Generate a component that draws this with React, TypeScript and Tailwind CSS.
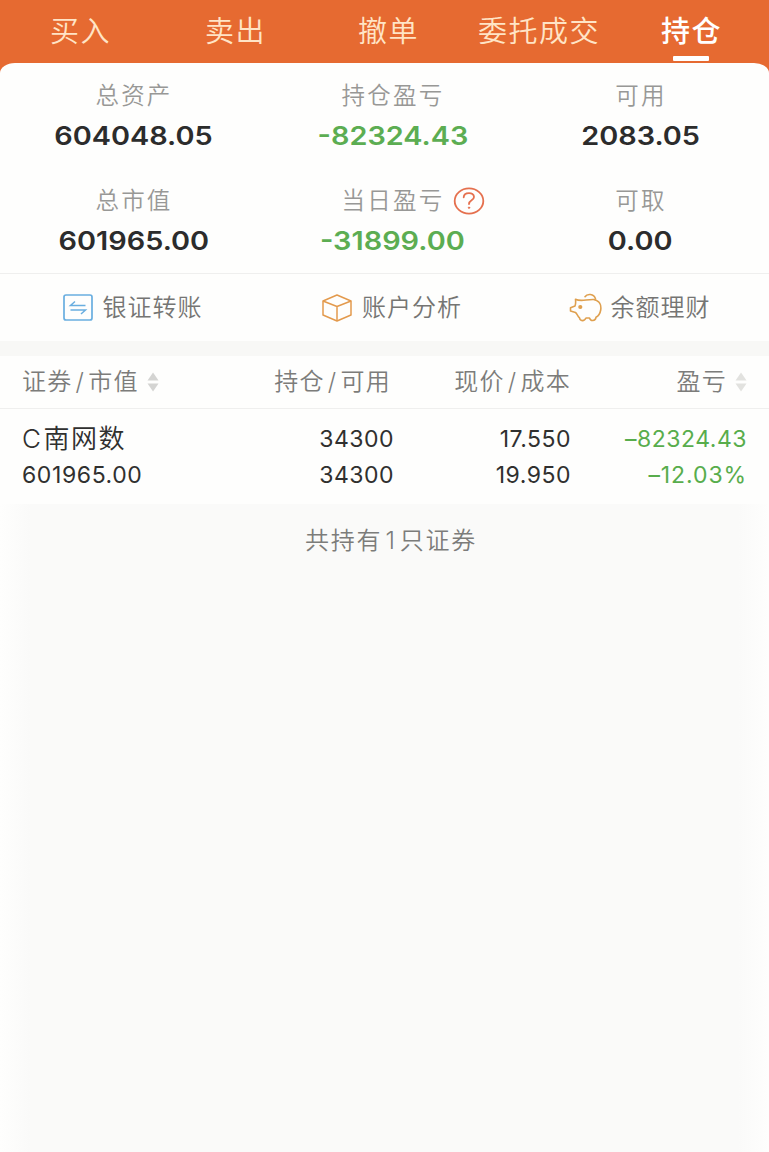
import { ReactNode } from 'react';
import clsx from 'clsx';

const tabs = [
  { name: '买入', box: 'w-[158px] pl-[50px]' },
  { name: '卖出', box: 'w-[152px] pl-[47px]' },
  { name: '撤单', box: 'w-[152px] pl-[48px]' },
  { name: '委托成交', box: 'w-[166px] pl-[16px]' },
  { name: '持仓', box: 'w-[125px] pl-[33px]' },
];

const holdings = [
  {
    name: 'C南网数',
    marketValue: '601965.00',
    amount: '34300',
    available: '34300',
    price: '17.550',
    cost: '19.950',
    profit: '–82324.43',
    profitRate: '–12.03%',
  },
];

function TransferIcon() {
  return (
    <svg width="31" height="27" viewBox="0 0 31 27" fill="none" stroke="#69aee0" strokeWidth="1.7">
      <rect x="1" y="1" width="28" height="25" rx="2" />
      <path d="M22.500 11.500H7.500L12 7.500M7.500 16H22.500L18 20" strokeWidth="1.5" />
    </svg>
  );
}

function BoxIcon() {
  return (
    <svg width="31" height="28" viewBox="0 0 31 28" fill="none" stroke="#e39a4d" strokeWidth="1.500" strokeLinejoin="round">
      <path d="M15 1L29 7V21L15 27L1 21V7Z" />
      <path d="M1 7L15 12.500L29 7M15 12.500V27" />
    </svg>
  );
}

function PiggyIcon() {
  return (
    <svg width="33" height="30" viewBox="0 0 33 30" fill="none" stroke="#dfa04f" strokeWidth="1.6" strokeLinecap="round" strokeLinejoin="round">
      <path d="M6.500 6.300C12 9 17 6.300 24.500 6.500C30.500 7.500 32.500 12 31.700 17C31 21 29.500 23 27 24.300C26.300 28.500 21.500 28.500 20.500 25H17C15.500 28.500 10.800 28.500 10.500 24.800C8.500 23 8 20.500 6.500 19.500L1.500 18V14.700L6 13C6.800 11 6.800 9 6.500 6.300Z" />
      <path d="M16 3.700C18 0.600 25 0.300 26.500 6" />
      <circle cx="11.300" cy="14" r="1.300" fill="#dfa04f" />
    </svg>
  );
}

function HelpIcon() {
  return (
    <svg width="32" height="28" viewBox="0 0 32 28" fill="none" stroke="#e5704e" strokeLinecap="round">
      <ellipse cx="16" cy="14" rx="14.300" ry="12.600" strokeWidth="1.800" />
      <path d="M10.700 10.300C11 4.800 21 4.800 21 10C21 13.500 16 13.200 16 17" strokeWidth="1.800" />
      <circle cx="16" cy="20.700" r="0.700" fill="#e5704e" />
    </svg>
  );
}

function SortIcon({ className }: { className?: string }) {
  return (
    <svg width="12" height="20" viewBox="0 0 12 20" className={className} fill="currentColor">
      <path d="M6 0.500L11.500 8.500H0.500Z" />
      <path d="M6 19.500L11.500 11.500H0.500Z" />
    </svg>
  );
}

function Slash() {
  return <span className="mr-[3px] ml-[3px]">/</span>;
}

function Stat({ label, value, loss, help }: { label: string; value: string; loss?: boolean; help?: boolean }) {
  return (
    <div className="flex flex-col items-center">
      <div className="relative flex h-9 items-center pl-[2px] text-[23.5px] tracking-[2.2px] font-[350] text-[#989896]">
        {label}
        {help && (
          <span className="absolute left-full ml-[9px]">
            <HelpIcon />
          </span>
        )}
      </div>
      <div
        className={clsx(
          'flex h-[42px] scale-x-[1.11] items-center pl-px text-[26px] font-semibold',
          loss ? 'text-[#5cad52]' : 'text-[#2c2c2c]'
        )}
      >
        {value}
      </div>
    </div>
  );
}

function Action({ icon, label }: { icon: ReactNode; label: string }) {
  return (
    <div className="flex items-center justify-center gap-[9px] text-[24px] tracking-[1px] font-[350] text-[#757573]">
      {icon}
      <span className="pt-px">{label}</span>
    </div>
  );
}

function App() {
  return (
    <div className="min-h-[1152px] w-[769px] overflow-hidden bg-[linear-gradient(to_right,#fefefd,#fafaf9_4%,#fafaf9_96%,#fefefd)] font-['Inter','Noto_Sans_CJK_SC',sans-serif]">
      <div className="bg-[#e66a31]">
        {/* 顶部标签 */}
        <nav className="flex h-[63px]">
          {tabs.map((tab) => {
            const active = tab.name === '持仓';
            return (
              <div key={tab.name} className={clsx('flex shrink-0 pt-3 whitespace-nowrap', tab.box)}>
                <div className="flex flex-col items-center">
                  <span
                    className={clsx(
                      'h-11 text-[29px] leading-10 tracking-[1.5px]',
                      active ? 'font-medium text-white' : 'font-[350] text-[#ffe4c6]'
                    )}
                  >
                    {tab.name}
                  </span>
                  {active && <span className="mr-[2px] h-[5px] w-9 rounded-[1px] bg-white" />}
                </div>
              </div>
            );
          })}
        </nav>

        {/* 资产概况 */}
        <section className="rounded-t-[15px_10px] bg-[#fefefd] pt-[15px]">
          <div className="grid h-[195px] grid-cols-[266px_252px_244px] content-start gap-y-[27px]">
            <Stat label="总资产" value="604048.05" />
            <Stat label="持仓盈亏" value="-82324.43" loss />
            <Stat label="可用" value="2083.05" />
            <Stat label="总市值" value="601965.00" />
            <Stat label="当日盈亏" value="-31899.00" loss help />
            <Stat label="可取" value="0.00" />
          </div>
          <div className="grid h-[68px] grid-cols-[265px_254px_241px] border-t border-[#efefee]">
            <Action icon={<TransferIcon />} label="银证转账" />
            <Action icon={<BoxIcon />} label="账户分析" />
            <Action icon={<PiggyIcon />} label="余额理财" />
          </div>
        </section>
      </div>

      {/* 持仓列表 */}
      <div className="h-[15px] bg-[#f8f8f6]" />
      <section className="bg-[#fefefd]">
        <div className="grid h-[53px] grid-cols-[200px_171px_178px_176px] items-center border-b border-[#efefee] pl-[22px] text-[24px] tracking-[1.3px] font-[350] text-[#7c7c7a]">
          <div className="flex items-center">
            证券
            <Slash />
            市值
            <SortIcon className="ml-2 text-[#d4d4d2]" />
          </div>
          <div className="pr-[2px] text-right">
            持仓
            <Slash />
            可用
          </div>
          <div className="text-right">
            现价
            <Slash />
            成本
          </div>
          <div className="flex items-center justify-end gap-2">
            盈亏
            <SortIcon className="text-[#e2e2df]" />
          </div>
        </div>
        {holdings.map((item) => (
          <div
            key={item.name}
            className="grid h-[95px] grid-cols-[200px_171px_178px_176px] pt-3 pl-[22px] text-[23px] leading-9 tracking-[0.5px] text-[#30302f]"
          >
            <div>
              <div className="h-9 text-[26px] tracking-[1.5px] font-[350]">
                <span className="mr-px">{item.name.charAt(0)}</span>
                {item.name.slice(1)}
              </div>
              <div className="h-9 tracking-[0.6px]">{item.marketValue}</div>
            </div>
            <div className="-mr-px text-right">
              <div className="h-9">{item.amount}</div>
              <div className="h-9">{item.available}</div>
            </div>
            <div className="text-right">
              <div className="h-9">{item.price}</div>
              <div className="h-9">{item.cost}</div>
            </div>
            <div className="text-right text-[#58ad4c]">
              <div className="h-9">{item.profit}</div>
              <div className="h-9 tracking-[0.9px]">{item.profitRate}</div>
            </div>
          </div>
        ))}
      </section>

      <p className="pt-[19px] pl-[13px] text-center text-[24px] leading-9 tracking-[1.8px] font-[350] text-[#7c7c7a]">
        共持有<span className="mx-[3px]">{holdings.length}</span>只证券
      </p>
    </div>
  );
}

export default App;
